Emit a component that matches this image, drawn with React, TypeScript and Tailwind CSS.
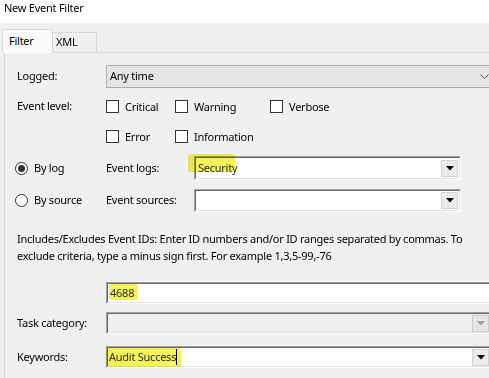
import React from "react";

const Check = ({ label, w }: { label: string; w: number }) => (
  <div className="flex items-center h-[13px] shrink-0" style={{ width: w }}>
    <div className="w-[13px] h-[13px] border border-[#333333] bg-white shrink-0" />
    <span className="ml-[6px] leading-[13px]">{label}</span>
  </div>
);

const DropBtn = ({ disabled }: { disabled?: boolean }) => (
  <div
    className={`w-[17px] h-[17px] shrink-0 flex items-center justify-center border ${
      disabled ? "border-[#cfcfcf] bg-[#e6e6e6]" : "border-[#d4d4d4] bg-[#ececec]"
    }`}
  >
    <svg width="8" height="5" viewBox="0 0 8 5">
      <path d="M0 0 H8 L4 4.5 Z" fill={disabled ? "#a0a0a0" : "#000"} />
    </svg>
  </div>
);

const Sunken = ({
  children,
  className,
  bg,
}: {
  children?: React.ReactNode;
  className: string;
  bg: string;
}) => (
  <div className={`shrink-0 border-t border-l border-[#a0a0a0] border-b border-r border-b-white border-r-white ${className}`}>
    <div
      className={`h-full border-t border-l border-[#696969] border-b border-r border-b-[#e3e3e3] border-r-[#e3e3e3] flex items-center ${bg}`}
    >
      {children}
    </div>
  </div>
);

const Hl = ({ children, cls }: { children: React.ReactNode; cls: string }) => (
  <span className="relative">
    <span className={`absolute bg-[#f4f45a] rounded-[3px] mix-blend-multiply ${cls}`} />
    <span className="relative text-[#2a2a2a]">{children}</span>
  </span>
);

export default function App() {
  return (
    <div
      className="w-[489px] h-[378px] bg-[#f0f0f0] overflow-hidden text-[11px] tracking-[-0.25px] text-black"
      style={{ fontFamily: '"Noto Sans", "Open Sans", sans-serif' }}
    >
      <div className="h-[23px] bg-white pl-[4px] leading-[16px]">New Event Filter</div>
      <div className="h-[29px] flex items-end pl-[2px]">
        <div className="relative z-10 w-[51px] h-[24px] -mb-px border-l border-t border-r border-[#d9d9d9] bg-[#fafafa] pl-[6px] pt-[3px] leading-[16px]">
          Filter
        </div>
        <div className="w-[44px] h-[20px] border-t border-r border-[#d9d9d9] bg-[#f0f0f0] pl-[3px] pt-[1px] leading-[16px]">
          XML
        </div>
      </div>
      <div className="ml-[4px] h-[326px] border-l border-t border-[#d9d9d9] overflow-hidden">
        {/* Logged */}
        <div className="mt-[12px] flex items-center h-[23px]">
          <div className="w-[101px] shrink-0 pl-[12px]">Logged:</div>
          <div className="w-[392px] h-[23px] shrink-0 bg-[#e5e5e5] border border-[#adadad] flex items-center pl-[3px]">
            <span className="flex-1">Any time</span>
            <svg width="9" height="5" viewBox="0 0 9 5" className="mr-[8px]">
              <path d="M0.5 0.5 L4.5 4.5 L8.5 0.5" fill="none" stroke="#555" strokeWidth="1" />
            </svg>
          </div>
        </div>
        {/* Event level */}
        <div className="mt-[12px] flex items-center h-[13px]">
          <div className="w-[101px] shrink-0 pl-[12px]">Event level:</div>
          <Check label="Critical" w={69} />
          <Check label="Warning" w={95} />
          <Check label="Verbose" w={80} />
        </div>
        <div className="mt-[17px] flex items-center h-[13px]">
          <div className="w-[101px] shrink-0" />
          <Check label="Error" w={69} />
          <Check label="Information" w={95} />
        </div>
        {/* By log */}
        <div className="mt-[13px] flex items-center h-[24px]">
          <div className="w-[101px] shrink-0 pl-[10px] flex items-center">
            <div className="w-[13px] h-[13px] rounded-full border border-[#333333] bg-white flex items-center justify-center">
              <div className="w-[7px] h-[7px] rounded-full bg-[#333333]" />
            </div>
            <span className="ml-[6px]">By log</span>
          </div>
          <div className="w-[88px] shrink-0">Event logs:</div>
          <Sunken className="w-[267px] h-[24px]" bg="bg-white">
            <div className="flex-1 pl-[2px]">
              <Hl cls="-left-[10px] -top-[6px] w-[47px] h-[18px]">Security</Hl>
            </div>
            <div className="mr-[1px]">
              <DropBtn />
            </div>
          </Sunken>
        </div>
        {/* By source */}
        <div className="mt-[9px] flex items-center h-[23px]">
          <div className="w-[101px] shrink-0 pl-[10px] flex items-center">
            <div className="w-[13px] h-[13px] rounded-full border border-[#333333] bg-white" />
            <span className="ml-[6px]">By source</span>
          </div>
          <div className="w-[88px] shrink-0">Event sources:</div>
          <Sunken className="w-[267px] h-[23px]" bg="bg-white">
            <div className="flex-1" />
            <div className="mr-[1px]">
              <DropBtn />
            </div>
          </Sunken>
        </div>
        {/* Description */}
        <div className="mt-[18px] pl-[12px] leading-[17px] whitespace-nowrap">
          Includes/Excludes Event IDs: Enter ID numbers and/or ID ranges separated by commas. To
          <br />
          exclude criteria, type a minus sign first. For example 1,3,5-99,-76
        </div>
        {/* 4688 */}
        <div className="mt-[18px] flex items-center h-[22px]">
          <div className="w-[101px] shrink-0" />
          <Sunken className="w-[392px] h-[22px]" bg="bg-white">
            <div className="pl-[2px]">
              <Hl cls="-left-[1px] -top-[1px] w-[29px] h-[16px]">4688</Hl>
            </div>
          </Sunken>
        </div>
        {/* Task category */}
        <div className="mt-[8px] flex items-center h-[22px]">
          <div className="w-[101px] shrink-0 pl-[12px]">Task category:</div>
          <Sunken className="w-[385px] h-[22px]" bg="bg-[#f0f0f0]">
            <div className="flex-1" />
            <DropBtn disabled />
          </Sunken>
        </div>
        {/* Keywords */}
        <div className="mt-[12px] flex items-center h-[22px]">
          <div className="w-[101px] shrink-0 pl-[12px]">Keywords:</div>
          <Sunken className="w-[385px] h-[22px]" bg="bg-white">
            <div className="flex-1 pl-[1px] flex items-center">
              <Hl cls="-left-[3px] -top-[1px] w-[75px] h-[19px]">Audit Success</Hl>
              <div className="w-px h-[16px] bg-black" />
            </div>
            <DropBtn />
          </Sunken>
        </div>
      </div>
    </div>
  );
}
